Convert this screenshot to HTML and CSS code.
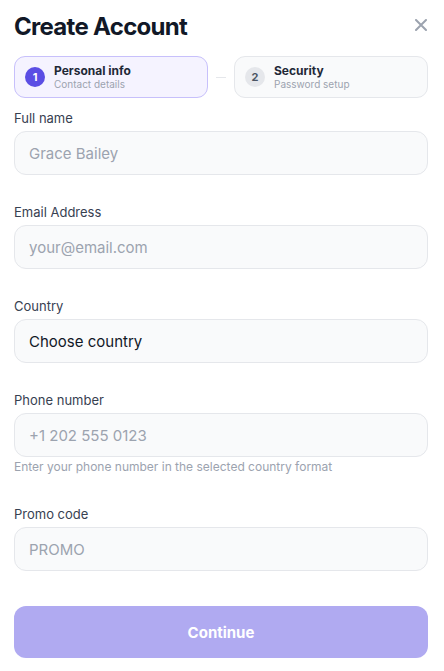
FILE: index.html
```html
<!DOCTYPE html>
<html lang="en">
<head>
<meta charset="utf-8">
<title>Create Account</title>
<link rel="stylesheet" href="styles.css">
</head>
<body>
<div class="modal">
  <header class="head">
    <h1 class="title">Create Account</h1>
    <button class="close" aria-label="Close">
      <svg width="12" height="12" viewBox="0 0 12 12"><path d="M1 1L11 11M11 1L1 11" stroke="#9ca3af" stroke-width="2" stroke-linecap="round"/></svg>
    </button>
  </header>
  <div class="steps">
    <div class="step active">
      <span class="num">1</span>
      <div class="step-text">
        <div class="step-title">Personal info</div>
        <div class="step-sub">Contact details</div>
      </div>
    </div>
    <span class="connector"></span>
    <div class="step">
      <span class="num">2</span>
      <div class="step-text">
        <div class="step-title">Security</div>
        <div class="step-sub">Password setup</div>
      </div>
    </div>
  </div>
  <form class="form">
    <div class="field">
      <label class="label">Full name</label>
      <input class="input" placeholder="Grace Bailey">
    </div>
    <div class="field">
      <label class="label">Email Address</label>
      <input class="input" placeholder="your@email.com">
    </div>
    <div class="field">
      <label class="label">Country</label>
      <div class="input select">Choose country</div>
    </div>
    <div class="field">
      <label class="label">Phone number</label>
      <input class="input" placeholder="+1 202 555 0123">
      <div class="hint">Enter your phone number in the selected country format</div>
    </div>
    <div class="field">
      <label class="label">Promo code</label>
      <input class="input" placeholder="PROMO">
    </div>
    <button type="button" class="submit">Continue</button>
  </form>
</div>
</body>
</html>
```
FILE: styles.css
```css
* { box-sizing: border-box; }
html, body { margin: 0; padding: 0; background: #fff; }
body { font-family: Inter, "Noto Sans", sans-serif; color: #111827; }
.modal { padding: 12px 16px 0 14px; }
.head { display: flex; align-items: center; justify-content: space-between; height: 30px; }
.title { margin: 0; font-size: 24px; font-weight: 700; letter-spacing: -0.7px; color: #111827; line-height: 30px; }
.close { border: 0; background: none; padding: 0; width: 12px; height: 14px; display: flex; align-items: center; justify-content: center; margin-right: 1px; margin-top: -4px; }
.steps { display: flex; align-items: center; gap: 8px; margin-top: 14px; }
.step { flex: 1; height: 42px; display: flex; align-items: center; gap: 9px; padding: 0 10px; border: 1px solid #e5e7eb; background: #f9fafb; border-radius: 11px; }
.step.active { border-color: #c7c0fb; background: #f5f3ff; }
.num { width: 20px; height: 20px; border-radius: 50%; background: #e5e7eb; color: #4b5563; font-size: 11px; font-weight: 700; display: flex; align-items: center; justify-content: center; flex: none; }
.active .num { background: #5b4ee4; color: #fff; }
.step-text { display: flex; flex-direction: column; }
.step-title { font-size: 12px; font-weight: 700; color: #1f2937; line-height: 15px; }
.step-sub { font-size: 10px; color: #9ca3af; line-height: 13px; }
.connector { width: 10px; height: 1px; background: #e5e7eb; flex: none; }
.form { display: flex; flex-direction: column; gap: 30px; margin-top: 13px; }
.field { display: flex; flex-direction: column; }
.label { font-size: 13px; color: #374151; line-height: 15px; margin-bottom: 5px; }
.input { height: 44px; border: 1px solid #e5e7eb; background: #f9fafb; border-radius: 12px; padding: 0 14px; font-family: inherit; font-size: 15px; color: #111827; outline: none; width: 100%; display: flex; align-items: center; margin-top: 0; }
.input::placeholder { color: #9ca3af; }
.select { color: #111827; }
.hint { font-size: 12px; color: #9ca3af; line-height: 16px; margin: 2px 0; }
.submit { margin-top: 5px; height: 52px; border: 0; border-radius: 12px; background: #b0aaf1; color: #fff; font-family: inherit; font-size: 15px; font-weight: 700; width: 100%; }
```
